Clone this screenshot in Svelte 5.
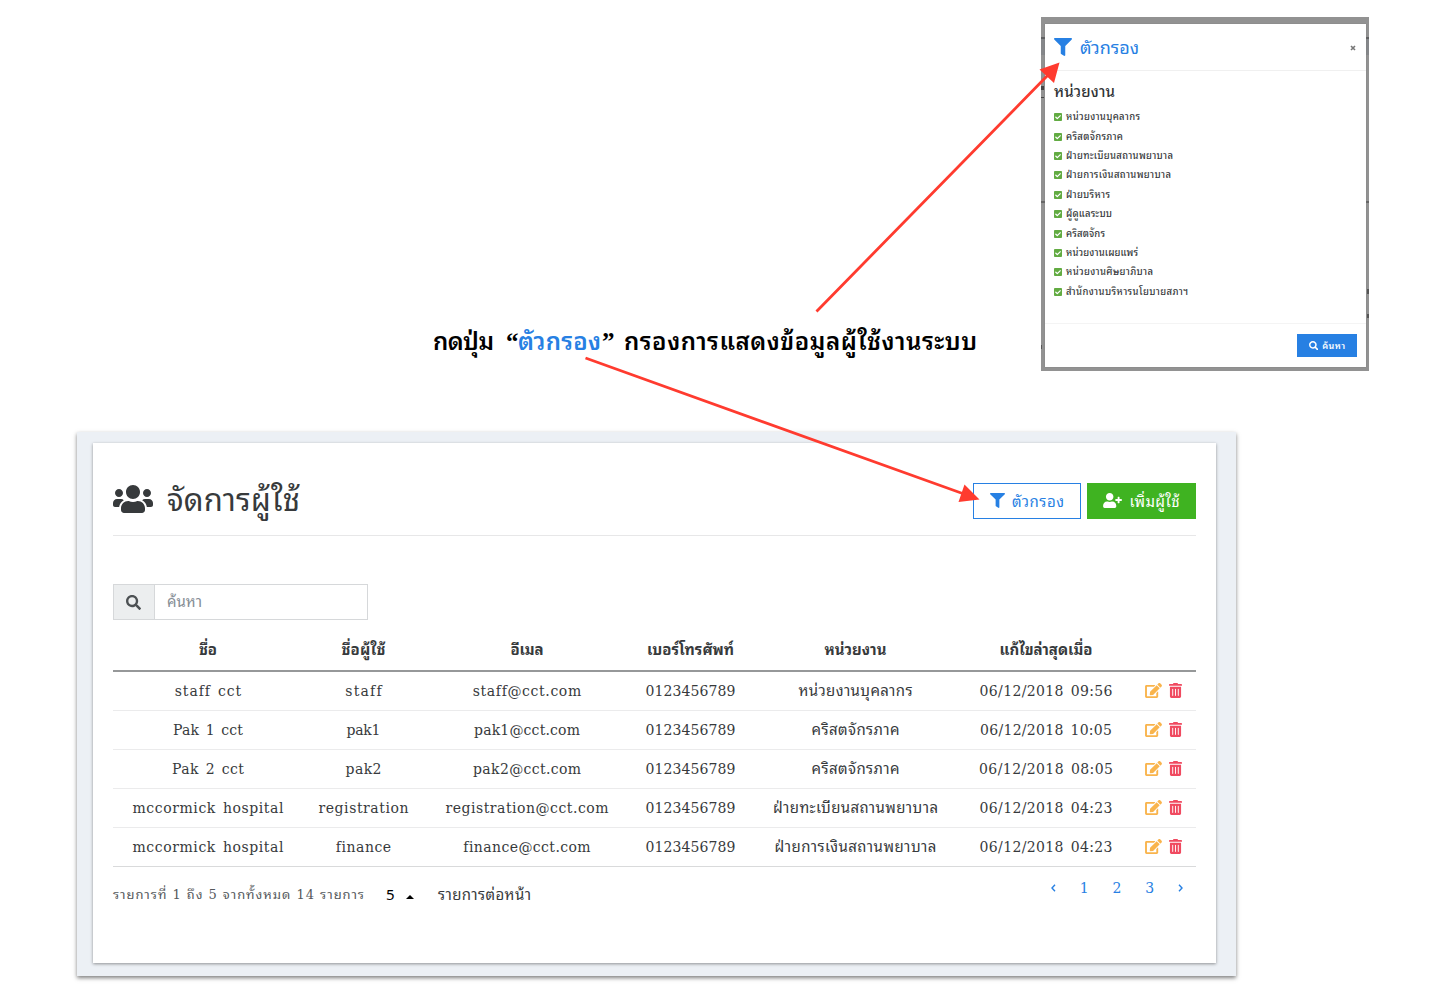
<script>
  const ICONS = {
    filter: ['0 0 512 512', 'M487.976 0H24.028C2.71 0-8.047 25.866 7.058 40.971L192 225.941V432c0 7.831 3.821 15.17 10.237 19.662l80 55.98C298.02 518.69 320 507.493 320 487.98V225.941l184.947-184.97C520.021 25.896 509.338 0 487.976 0z'],
    search: ['0 0 512 512', 'M505 442.7L405.3 343c-4.5-4.5-10.6-7-17-7H372c27.6-35.3 44-79.7 44-128C416 93.1 322.9 0 208 0S0 93.1 0 208s93.1 208 208 208c48.3 0 92.7-16.4 128-44v16.3c0 6.4 2.5 12.5 7 17l99.7 99.7c9.4 9.4 24.6 9.4 33.9 0l28.3-28.3c9.4-9.4 9.4-24.6.1-34zM208 336c-70.7 0-128-57.2-128-128 0-70.7 57.2-128 128-128 70.7 0 128 57.2 128 128 0 70.7-57.2 128-128 128z'],
    users: ['0 0 640 512', 'M96 224c35.3 0 64-28.7 64-64s-28.7-64-64-64-64 28.7-64 64 28.7 64 64 64zm448 0c35.3 0 64-28.7 64-64s-28.7-64-64-64-64 28.7-64 64 28.7 64 64 64zm32 32h-64c-17.6 0-33.5 7.1-45.1 18.6 40.3 22.1 68.9 62 75.1 109.4h66c17.7 0 32-14.3 32-32v-32c0-35.3-28.7-64-64-64zm-256 0c61.9 0 112-50.1 112-112S381.9 32 320 32 208 82.1 208 144s50.1 112 112 112zm76.8 32h-8.3c-20.8 10-43.9 16-68.5 16s-47.6-6-68.5-16h-8.3C179.6 288 128 339.6 128 403.2V432c0 26.5 21.5 48 48 48h288c26.5 0 48-21.5 48-48v-28.8c0-63.6-51.6-115.2-115.2-115.2zm-223.7-13.4C161.5 263.1 145.6 256 128 256H64c-35.3 0-64 28.7-64 64v32c0 17.7 14.3 32 32 32h65.9c6.3-47.4 34.9-87.3 75.2-109.4z'],
    userPlus: ['0 0 640 512', 'M624 208h-64v-64c0-8.8-7.2-16-16-16h-32c-8.8 0-16 7.2-16 16v64h-64c-8.8 0-16 7.2-16 16v32c0 8.8 7.2 16 16 16h64v64c0 8.8 7.2 16 16 16h32c8.8 0 16-7.2 16-16v-64h64c8.8 0 16-7.2 16-16v-32c0-8.8-7.2-16-16-16zm-400 48c70.7 0 128-57.3 128-128S294.7 0 224 0 96 57.3 96 128s57.3 128 128 128zm89.6 32h-16.7c-22.2 10.2-46.9 16-72.9 16s-50.6-5.8-72.9-16h-16.7C60.2 288 0 348.2 0 422.4V464c0 26.5 21.5 48 48 48h352c26.5 0 48-21.5 48-48v-41.6c0-74.2-60.2-134.4-134.4-134.4z'],
    edit: ['0 0 576 512', 'M402.6 83.2l90.2 90.2c3.8 3.8 3.8 10 0 13.8L274.4 405.6l-92.8 10.3c-12.4 1.4-22.9-9.1-21.5-21.5l10.3-92.8L388.8 83.2c3.8-3.8 10-3.8 13.8 0zm162-22.9l-48.8-48.8c-15.2-15.2-39.9-15.2-55.2 0l-35.4 35.4c-3.8 3.8-3.8 10 0 13.8l90.2 90.2c3.8 3.8 10 3.8 13.8 0l35.4-35.4c15.2-15.3 15.2-40 0-55.2zM384 346.2V448H64V128h229.8c3.2 0 6.2-1.3 8.5-3.5l40-40c7.6-7.6 2.2-20.5-8.5-20.5H48C21.5 64 0 85.5 0 112v352c0 26.5 21.5 48 48 48h352c26.5 0 48-21.5 48-48V306.2c0-10.7-12.9-16-20.5-8.5l-40 40c-2.2 2.3-3.5 5.3-3.5 8.5z'],
    trash: ['0 0 448 512', 'M0 84V56c0-13.3 10.7-24 24-24h112l9.4-18.7c4-8.2 12.3-13.3 21.4-13.3h114.3c9.1 0 17.4 5.1 21.5 13.3L312 32h112c13.3 0 24 10.7 24 24v28c0 6.6-5.4 12-12 12H12C5.4 96 0 90.6 0 84zm416 56v324c0 26.5-21.5 48-48 48H80c-26.5 0-48-21.5-48-48V140c0-6.6 5.4-12 12-12h360c6.6 0 12 5.4 12 12zm-272 68c0-8.8-7.2-16-16-16s-16 7.2-16 16v224c0 8.8 7.2 16 16 16s16-7.2 16-16V208zm96 0c0-8.8-7.2-16-16-16s-16 7.2-16 16v224c0 8.8 7.2 16 16 16s16-7.2 16-16V208zm96 0c0-8.8-7.2-16-16-16s-16 7.2-16 16v224c0 8.8 7.2 16 16 16s16-7.2 16-16V208z'],
    check: ['0 32 448 448', 'M400 480H48c-26.51 0-48-21.49-48-48V80c0-26.51 21.49-48 48-48h352c26.51 0 48 21.49 48 48v352c0 26.51-21.49 48-48 48zm-204.686-98.059l184-184c6.248-6.248 6.248-16.379 0-22.627l-22.627-22.627c-6.248-6.248-16.379-6.249-22.628 0L184 302.745l-70.059-70.059c-6.248-6.248-16.379-6.248-22.628 0l-22.627 22.627c-6.248 6.248-6.248 16.379 0 22.627l104 104c6.249 6.25 16.379 6.25 22.628.001z'],
  };

  const departments = [
    ['หน่วยงานบุคลากร', 74],
    ['คริสตจักรภาค', 57],
    ['ฝ่ายทะเบียนสถานพยาบาล', 107],
    ['ฝ่ายการเงินสถานพยาบาล', 105],
    ['ฝ่ายบริหาร', 44],
    ['ผู้ดูแลระบบ', 46],
    ['คริสตจักร', 39],
    ['หน่วยงานเผยแพร่', 72],
    ['หน่วยงานศิษยาภิบาล', 87],
    ['สำนักงานบริหารนโยบายสภาฯ', 122],
  ];

  const columns = [
    ['ชื่อ', 18],
    ['ชื่อผู้ใช้', 44],
    ['อีเมล', 33],
    ['เบอร์โทรศัพท์', 87],
    ['หน่วยงาน', 62],
    ['แก้ไขล่าสุดเมื่อ', 93],
  ];

  const rows = [
    [['staff cct', 66], ['staff', 36], ['staff@cct.com', 108], ['0123456789', 90], ['หน่วยงานบุคลากร', 114], ['06/12/2018 09:56', 133]],
    [['Pak 1 cct', 70], ['pak1', 34], ['pak1@cct.com', 106], ['0123456789', 90], ['คริสตจักรภาค', 88], ['06/12/2018 10:05', 132]],
    [['Pak 2 cct', 72], ['pak2', 36], ['pak2@cct.com', 108], ['0123456789', 90], ['คริสตจักรภาค', 88], ['06/12/2018 08:05', 134]],
    [['mccormick hospital', 151], ['registration', 90], ['registration@cct.com', 163], ['0123456789', 90], ['ฝ่ายทะเบียนสถานพยาบาล', 165], ['06/12/2018 04:23', 133]],
    [['mccormick hospital', 151], ['finance', 55], ['finance@cct.com', 127], ['0123456789', 90], ['ฝ่ายการเงินสถานพยาบาล', 162], ['06/12/2018 04:23', 133]],
  ];

  // Tracks a label out (or in) so that its ink spans the given width.
  function track(node, width) {
    node.style.letterSpacing = '0px';
    const natural = node.getBoundingClientRect().width;
    node.style.letterSpacing = '1px';
    const count = Math.round(node.getBoundingClientRect().width - natural);
    const spacing = count > 1 ? (width - natural) / (count - 1) : 0;
    node.style.letterSpacing = `${spacing}px`;
    node.style.marginRight = `${-spacing}px`;
  }

  const isThai = (text) => /[\u0e00-\u0e7f]/.test(text);
</script>

{#snippet icon(name, cls)}
  <svg class="icon {cls}" viewBox={ICONS[name][0]} aria-hidden="true"><path d={ICONS[name][1]} /></svg>
{/snippet}

{#snippet label(text, width)}
  <span class="label" use:track={width}>{text}</span>
{/snippet}

<main class="canvas">
  <section class="shot modal-shot">
    <div class="modal">
      <header class="modal-head">
        {@render icon('filter', 'i-modal')}
        <h2>{@render label('ตัวกรอง', 59)}</h2>
        <svg class="close" viewBox="0 0 6 6"><path d="M1 1 5 5M5 1 1 5" /></svg>
      </header>
      <div class="modal-body">
        <h3>{@render label('หน่วยงาน', 61)}</h3>
        <ul>
          {#each departments as [name, width]}
            <li>{@render icon('check', 'i-check')}{@render label(name, width)}</li>
          {/each}
        </ul>
      </div>
      <footer class="modal-foot">
        <button class="find">{@render icon('search', 'i-find')}{@render label('ค้นหา', 23)}</button>
      </footer>
    </div>
  </section>

  <p class="caption">
    <span class="c1">{@render label('กดปุ่ม', 61)}</span>
    <span class="quote">“</span><span class="blue">{@render label('ตัวกรอง', 83)}</span><span class="quote">”</span>
    <span class="c2">{@render label('กรองการแสดงข้อมูลผู้ใช้งานระบบ', 353)}</span>
  </p>

  <section class="shot page-shot">
    <div class="card">
      <header class="card-head">
        {@render icon('users', 'i-users')}
        <h1>{@render label('จัดการผู้ใช้', 133)}</h1>
        <div class="actions">
          <button class="btn outline">{@render icon('filter', 'i-btn')}{@render label('ตัวกรอง', 52)}</button>
          <button class="btn solid">{@render icon('userPlus', 'i-plus')}{@render label('เพิ่มผู้ใช้', 50)}</button>
        </div>
      </header>

      <div class="search">
        <span class="addon">{@render icon('search', 'i-search')}</span>
        <span class="field">{@render label('ค้นหา', 35)}</span>
      </div>

      <table>
        <colgroup>
          <col class="w1" /><col class="w2" /><col class="w3" /><col class="w4" /><col class="w5" /><col class="w6" /><col class="w7" />
        </colgroup>
        <thead>
          <tr>
            {#each columns as [name, width]}
              <th>{@render label(name, width)}</th>
            {/each}
            <th></th>
          </tr>
        </thead>
        <tbody>
          {#each rows as row}
            <tr>
              {#each row as [text, width]}
                <td class:thai={isThai(text)}>{@render label(text, width)}</td>
              {/each}
              <td><div class="tools">{@render icon('edit', 'i-edit')}{@render icon('trash', 'i-trash')}</div></td>
            </tr>
          {/each}
        </tbody>
      </table>

      <footer class="card-foot">
        <span class="summary">{@render label('รายการที่ 1 ถึง 5 จากทั้งหมด 14 รายการ', 251)}</span>
        <span class="size">5</span>
        <span class="caret"></span>
        <span class="per">{@render label('รายการต่อหน้า', 93)}</span>
        <nav>
          <svg class="chev" viewBox="0 0 5 8"><path d="M4 .8 1 4l3 3.2" /></svg>
          <span>1</span><span>2</span><span>3</span>
          <svg class="chev" viewBox="0 0 5 8"><path d="M1 .8 4 4 1 7.2" /></svg>
        </nav>
      </footer>
    </div>
  </section>

  <svg class="arrows" viewBox="0 0 1440 1005" aria-hidden="true">
    <path class="shaft" d="M816.5 311.5 1048 75M585.5 358 964 494" />
    <path class="tip" d="M1059.5 62.5 1039.5 69.5 1054 83zM979.5 499.5 964.5 484.5 958.5 502z" />
  </svg>
</main>

<style>
  :global(body) {
    margin: 0;
    background: #fff;
  }
  .canvas {
    position: relative;
    width: 1440px;
    height: 1005px;
    overflow: hidden;
    background: #fff;
    color: #373a3c;
    font-family: 'DejaVu Serif', 'Noto Sans Thai Looped', Loma, Waree, 'Noto Sans Thai', 'Noto Sans', sans-serif;
    font-size: 14px;
  }
  h1, h2, h3, p, ul {
    margin: 0;
    padding: 0;
    font-weight: 400;
  }
  button {
    font: inherit;
    border: 0;
    padding: 0;
    cursor: pointer;
  }
  .label {
    display: inline-block;
    white-space: pre;
  }
  .icon {
    display: block;
    flex: none;
    fill: currentColor;
  }
  .shot {
    position: absolute;
    box-sizing: border-box;
  }

  .modal-shot {
    left: 1041px;
    top: 17px;
    width: 328px;
    height: 354px;
    padding: 7px 3px 4px 4px;
    /* slivers of the dimmed table that stay visible around the dialog */
    background:
      linear-gradient(#5f6061, #5f6061) 0 20px / 100% 2px no-repeat,
      linear-gradient(#85878a, #85878a) 0 22px / 100% 16px no-repeat,
      linear-gradient(#444, #444) 0 69px / 3px 4px no-repeat,
      linear-gradient(#444, #444) 0 80px / 3px 1px no-repeat,
      linear-gradient(#666, #666) 0 184px / 100% 2px no-repeat,
      linear-gradient(#555, #555) 100% 272px / 2px 5px no-repeat,
      linear-gradient(#555, #555) 100% 297px / 2px 4px no-repeat,
      linear-gradient(#555, #555) 0 328px / 1px 4px no-repeat,
      #929292;
  }
  .modal {
    height: 343px;
    display: flex;
    flex-direction: column;
    background: #fff;
    box-shadow: 0 0 1px #777;
  }
  .modal-head {
    display: flex;
    align-items: center;
    height: 46px;
    padding: 0 10px 0 9px;
    border-bottom: 1px solid #f0f0f0;
    color: #2780e3;
  }
  .i-modal { width: 18px; height: 18px; margin-top: -1px; }
  h2 {
    margin: 1px 0 0 8px;
    font-size: 18px;
    line-height: 30px;
  }
  .close {
    width: 6px;
    height: 6px;
    margin: 1px 0 0 auto;
    stroke: #777;
    stroke-width: 1.6;
  }
  .modal-body {
    height: 253px;
    padding: 9px 9px 0;
    box-sizing: border-box;
    border-bottom: 1px solid #f4f4f4;
  }
  h3 {
    font-size: 15px;
    font-weight: 500;
    line-height: 25px;
    color: #303336;
  }
  ul { list-style: none; padding-top: 2px; }
  li {
    display: flex;
    align-items: center;
    gap: 4px;
    height: 19.4px;
    font-size: 9.5px;
    line-height: 19px;
    font-weight: 500;
  }
  .i-check { width: 8px; height: 8px; margin-top: 1px; color: #62ab42; }
  .modal-foot {
    flex: 1;
    display: flex;
    justify-content: flex-end;
    padding: 10px 9px 0;
  }
  .find {
    display: flex;
    align-items: center;
    justify-content: center;
    gap: 4px;
    width: 60px;
    height: 23px;
    background: #2780e3;
    color: #fff;
    font-size: 9px;
    font-weight: 600;
  }
  .find .label { margin-top: -2px; }
  .i-find { width: 9.5px; height: 9.5px; }

  .caption {
    position: absolute;
    left: 433px;
    top: 322px;
    display: flex;
    color: #000;
    font-size: 24px;
    font-weight: 600;
    line-height: 40px;
    white-space: nowrap;
  }
  .quote {
    width: 12px;
    font-family: 'Liberation Serif', serif;
    font-size: 25px;
    font-weight: 700;
  }
  .c1 { width: 73px; }
  .blue { width: 84px; color: #2780e3; }
  .c2 { margin-left: 10px; }

  .page-shot {
    left: 77px;
    top: 432px;
    width: 1159px;
    height: 544px;
    padding: 11px 20px 13px 16px;
    background: #ecf0f5;
    box-shadow: 0 2px 4px rgba(0, 0, 0, 0.5);
  }
  .card {
    height: 520px;
    padding: 0 20px;
    box-sizing: border-box;
    background: #fff;
    box-shadow: 0 1px 3px rgba(0, 0, 0, 0.4);
  }
  .card-head {
    display: flex;
    align-items: center;
    height: 92px;
    border-bottom: 1px solid #e7e7e8;
  }
  .i-users { width: 40px; height: 32px; margin-top: 20px; }
  h1 {
    margin: 22px 0 0 14px;
    font-size: 31px;
    line-height: 50px;
    font-weight: 400;
  }
  .actions {
    display: flex;
    gap: 6px;
    margin: 24px 0 0 auto;
  }
  .btn {
    display: flex;
    align-items: center;
    justify-content: center;
    gap: 7px;
    height: 36px;
    box-sizing: border-box;
    font-size: 15px;
  }
  .btn .label { margin-top: -3px; }
  .outline { width: 108px; border: 1px solid #2780e3; background: #fff; color: #2780e3; }
  .solid { width: 109px; background: #3fb321; color: #fff; }
  .i-btn { width: 15px; height: 15px; margin-top: -2px; }
  .i-plus { width: 19px; height: 15px; margin-top: -2px; }

  .search {
    display: flex;
    width: 255px;
    height: 36px;
    margin-top: 48px;
    box-sizing: border-box;
    border: 1px solid #d6d8da;
    font-size: 15px;
    line-height: 34px;
    color: #868e96;
  }
  .addon {
    display: flex;
    align-items: center;
    justify-content: center;
    width: 38px;
    padding-right: 2px;
    border-right: 1px solid #d6d8da;
    background: #eceeef;
    color: #4d5154;
  }
  .field { padding-left: 12px; }
  .i-search { width: 15px; height: 15px; }

  table {
    width: 1083px;
    margin-top: 10px;
    table-layout: fixed;
    border-collapse: separate;
    border-spacing: 0;
  }
  .w1 { width: 190px; }
  .w2 { width: 121px; }
  .w3 { width: 206px; }
  .w4 { width: 121px; }
  .w5 { width: 209px; }
  .w6 { width: 172px; }
  .w7 { width: 64px; }
  th, td {
    padding: 0;
    text-align: center;
    line-height: 20px;
    box-sizing: border-box;
  }
  th {
    height: 42px;
    border-bottom: 2px solid #969899;
    font-size: 15px;
    font-weight: 700;
  }
  td {
    height: 39px;
    border-bottom: 1px solid #ebebec;
    word-spacing: 2px;
  }
  .thai { font-size: 15px; }
  tbody tr:last-child td { border-bottom-color: #d9dadb; }
  .tools {
    display: flex;
    align-items: center;
    gap: 7px;
    padding: 0 0 2px 13px;
  }
  .i-edit { width: 17px; height: 15px; color: #f9b44c; }
  .i-trash { width: 13px; height: 15px; color: #f04a60; }

  .card-foot {
    display: flex;
    align-items: center;
    height: 55px;
  }
  .summary {
    width: 273px;
    margin-top: -3px;
    font-size: 13px;
    color: #55595c;
  }
  .size {
    width: 20px;
    margin-top: -2px;
    color: #000;
    font: 15px/20px 'Noto Sans', sans-serif;
  }
  .caret {
    width: 0;
    margin: 4px 24px 0 0;
    border: 4px solid transparent;
    border-top: 0;
    border-bottom-color: #000;
  }
  .per { margin-top: -4px; font-size: 15px; }
  nav {
    display: flex;
    align-items: center;
    justify-content: space-between;
    width: 132px;
    margin: -14px 13px 0 auto;
    color: #2780e3;
  }
  .chev {
    width: 5px;
    height: 8px;
    fill: none;
    stroke: currentColor;
    stroke-width: 1.4;
  }

  .arrows {
    position: absolute;
    inset: 0;
    width: 1440px;
    height: 1005px;
    pointer-events: none;
  }
  .shaft { fill: none; stroke: #ff3b2f; stroke-width: 2.8; }
  .tip { fill: #ff3b2f; }
</style>
